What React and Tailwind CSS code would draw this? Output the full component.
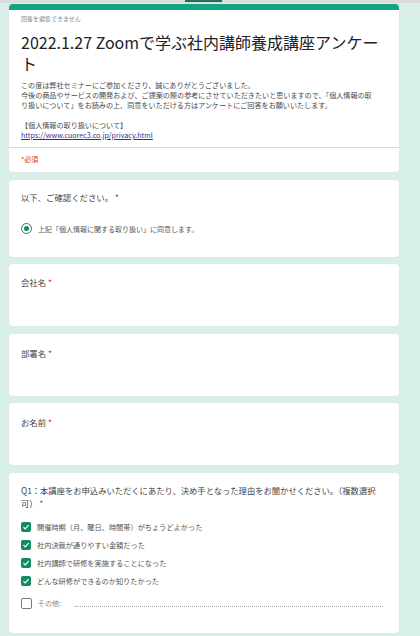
import React from "react";

const font = { fontFamily: '"Noto Sans CJK JP", "Noto Sans", sans-serif' };

function Check() {
  return (
    <span className="flex h-[10px] w-[10px] shrink-0 items-center justify-center rounded-[2px] bg-[#138a61]">
      <svg width="8" height="8" viewBox="0 0 10 10">
        <path d="M1.8 5.2 L4 7.3 L8.3 2.6" fill="none" stroke="#fff" strokeWidth="1.5" />
      </svg>
    </span>
  );
}

function Option({ children }) {
  return (
    <div className="flex h-[18px] items-center gap-[6px]">
      <Check />
      <span className="text-[7.2px] leading-[10px] text-[#555] whitespace-nowrap">{children}</span>
    </div>
  );
}

function Label({ children }) {
  return (
    <div className="text-[8.4px] leading-[12px] text-[#444]">
      {children}
      <span className="text-[#d93025]"> *</span>
    </div>
  );
}

export default function App() {
  return (
    <div className="min-h-[636px] w-[420px] bg-[#d8efea] overflow-hidden" style={font}>
      <div className="h-[3px] w-full bg-[#dcdcdc]">
        <div className="ml-[185px] h-[2px] w-[37px] bg-[#1f6f5c]" />
      </div>
      <div className="ml-[9px] mt-[1px] flex w-[390px] flex-col">
        {/* header card */}
        <div className="h-[168px] rounded-[4px] border-t-[6px] border-[#13a481] bg-white shadow-[0_0_0_1px_#e3e8e6]">
          <div className="px-[12px] pt-[4px]">
            <div className="text-[6px] leading-[10px] text-[#8a8a8a]">回答を編集できません</div>
            <div className="mt-[7.5px] text-[16px] leading-[21px] text-[#202124] whitespace-nowrap">
              <div className="h-[21px]">2022.1.27 Zoomで学ぶ社内講師養成講座アンケー</div>
              <div className="h-[21px]">ト</div>
            </div>
            <div className="mt-[6.5px] text-[7.1px] leading-[10px] text-[#4a4a4a] whitespace-nowrap">
              この度は弊社セミナーにご参加くださり、誠にありがとうございました。
              <br />
              今後の商品やサービスの開発および、ご提案の際の参考にさせていただきたいと思いますので、「個人情報の取
              <br />
              り扱いについて」をお読みの上、同意をいただける方はアンケートにご回答をお願いいたします。
              <br />
              <br />
              【個人情報の取り扱いについて】
              <br />
              <span className="text-[#3a2f8f] underline">https://www.cuorec3.co.jp/privacy.html</span>
            </div>
          </div>
          <div className="mt-[6.5px] h-px w-full bg-[#dadce0]" />
          <div className="px-[12px] pt-[6px] text-[7px] leading-[10px] text-[#d93025]">*必須</div>
        </div>

        {/* confirm card */}
        <div className="mt-[8px] h-[77px] rounded-[4px] bg-white px-[12px] pt-[11px] shadow-[0_0_0_1px_#e3e8e6]">
          <Label>以下、ご確認ください。</Label>
          <div className="mt-[20px] flex items-center gap-[6px]">
            <span className="flex h-[11px] w-[11px] items-center justify-center rounded-full border-[1.5px] border-[#138a61]">
              <span className="h-[5px] w-[5px] rounded-full bg-[#138a61]" />
            </span>
            <span className="text-[7px] leading-[10px] text-[#555] whitespace-nowrap">
              上記「個人情報に関する取り扱い」に同意します。
            </span>
          </div>
        </div>

        <div className="mt-[7px] h-[62px] rounded-[4px] bg-white px-[12px] pt-[12px] shadow-[0_0_0_1px_#e3e8e6]">
          <Label>会社名</Label>
        </div>
        <div className="mt-[8px] h-[62px] rounded-[4px] bg-white px-[12px] pt-[13px] shadow-[0_0_0_1px_#e3e8e6]">
          <Label>部署名</Label>
        </div>
        <div className="mt-[7px] h-[62px] rounded-[4px] bg-white px-[12px] pt-[13px] shadow-[0_0_0_1px_#e3e8e6]">
          <Label>お名前</Label>
        </div>

        {/* Q1 card */}
        <div className="mt-[8px] h-[160px] rounded-[4px] bg-white px-[12px] pt-[11px] shadow-[0_0_0_1px_#e3e8e6]">
          <div className="text-[8.3px] leading-[13px] text-[#444] whitespace-nowrap">
            Q1：本講座をお申込みいただくにあたり、決め手となった理由をお聞かせください。（複数選択
            <br />
            可）<span className="text-[#d93025]"> *</span>
          </div>
          <div className="mt-[8px] flex flex-col">
            <Option>開催時期（月、曜日、時間帯）がちょうどよかった</Option>
            <Option>社内決裁が通りやすい金額だった</Option>
            <Option>社内講師で研修を実施することになった</Option>
            <Option>どんな研修ができるのか知りたかった</Option>
            <div className="mt-[4px] flex h-[18px] items-center gap-[6px]">
              <span className="h-[11px] w-[11px] shrink-0 rounded-[2px] border-[1.5px] border-[#7a7a7a]" />
              <span className="text-[7px] leading-[10px] text-[#888] whitespace-nowrap">その他:</span>
              <span className="mb-[-6px] ml-[8px] mr-[4px] h-px flex-1 border-b border-dotted border-[#aaa]" />
            </div>
          </div>
        </div>
      </div>
    </div>
  );
}
